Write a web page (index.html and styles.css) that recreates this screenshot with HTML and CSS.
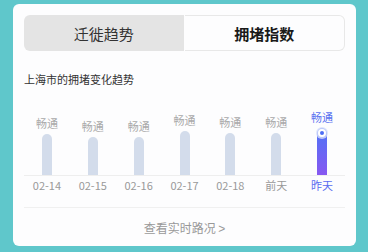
FILE: index.html
```html
<!DOCTYPE html>
<html lang="zh-CN">
<head>
    <meta charset="UTF-8">
    <meta name="viewport" content="width=device-width, initial-scale=1.0">
    <title>拥堵指数</title>
    <link rel="stylesheet" href="styles.css">
</head>
<body>
    <div class="card">
        <!-- 切换标签 -->
        <div class="tabs">
            <div class="tab tab-left">迁徙趋势</div>
            <div class="tab tab-right">拥堵指数</div>
        </div>
        <h2 class="title">上海市的拥堵变化趋势</h2>
        <!-- 柱状图 -->
        <div class="chart">
            <div class="col">
                <span class="level">畅通</span>
                <div class="bar" style="height: 41px"></div>
            </div>
            <div class="col">
                <span class="level">畅通</span>
                <div class="bar" style="height: 38px"></div>
            </div>
            <div class="col">
                <span class="level">畅通</span>
                <div class="bar" style="height: 38px"></div>
            </div>
            <div class="col">
                <span class="level">畅通</span>
                <div class="bar" style="height: 44px"></div>
            </div>
            <div class="col">
                <span class="level">畅通</span>
                <div class="bar" style="height: 42px"></div>
            </div>
            <div class="col">
                <span class="level">畅通</span>
                <div class="bar" style="height: 42px"></div>
            </div>
            <div class="col active">
                <span class="level">畅通</span>
                <div class="bar" style="height: 47px"><span class="dot"></span></div>
            </div>
        </div>
        <div class="dates">
            <span>02-14</span>
            <span>02-15</span>
            <span>02-16</span>
            <span>02-17</span>
            <span>02-18</span>
            <span>前天</span>
            <span class="active">昨天</span>
        </div>
        <div class="more">查看实时路况 <span class="arrow">&gt;</span></div>
    </div>
</body>
</html>
```

FILE: styles.css
```css
*{
    margin: 0;
    padding: 0;
    box-sizing: border-box;
}
body{
    width: 368px;
    height: 252px;
    background-color: #5fc7cb;
    padding: 4px 12px 0 13px;
    font-family: "Noto Sans CJK SC", "Noto Sans", sans-serif;
    overflow: hidden;
}
.card{
    width: 343px;
    height: 242px;
    background-color: #fdfdfe;
    border-radius: 6px;
    padding: 11px 11px 0 11px;
}
.tabs{
    display: flex;
    height: 36px;
}
.tab{
    flex: 1;
    display: flex;
    align-items: center;
    justify-content: center;
    font-size: 15px;
}
.tab-left{
    background-color: #e4e4e4;
    border-radius: 6px 0 0 6px;
    color: #333;
}
.tab-right{
    border: 1px solid #e8e8e8;
    border-left: none;
    border-radius: 0 6px 6px 0;
    margin-left: 1px;
    color: #1a1a1a;
    font-weight: bold;
}
.title{
    margin-top: 20px;
    font-size: 11px;
    line-height: 16px;
    font-weight: normal;
    color: #333;
}
.chart{
    display: flex;
    height: 89px;
    border-bottom: 1px solid #eeeeee;
}
.col{
    flex: 1;
    display: flex;
    flex-direction: column;
    align-items: center;
    justify-content: flex-end;
}
.level{
    font-size: 11px;
    line-height: 14px;
    color: #aaa;
    margin-bottom: 4px;
}
.bar{
    width: 10px;
    background-color: #d3dceb;
    border-radius: 5px 5px 0 0;
    display: flex;
    justify-content: center;
}
.col.active .level{
    color: #5a72f0;
}
.col.active .bar{
    background: linear-gradient(to bottom, #4d74f6, #8758f1);
}
.dot{
    width: 8px;
    height: 8px;
    margin-top: 1px;
    border-radius: 50%;
    background-color: #4d6ef4;
    border: 2px solid #fff;
    box-shadow: 0 0 0 2px rgba(215, 222, 250, 0.8);
}
.dates{
    display: flex;
    padding-top: 1px;
}
.dates span{
    flex: 1;
    text-align: center;
    font-size: 11px;
    line-height: 16px;
    color: #999;
}
.dates .active{
    color: #5a6cf0;
}
.more{
    margin-top: 14px;
    border-top: 1px solid #f0f0f0;
    padding-top: 11px;
    text-align: center;
    font-size: 12px;
    line-height: 17px;
    color: #999;
}
.arrow{
    font-family: "Liberation Sans", sans-serif;
}
```
